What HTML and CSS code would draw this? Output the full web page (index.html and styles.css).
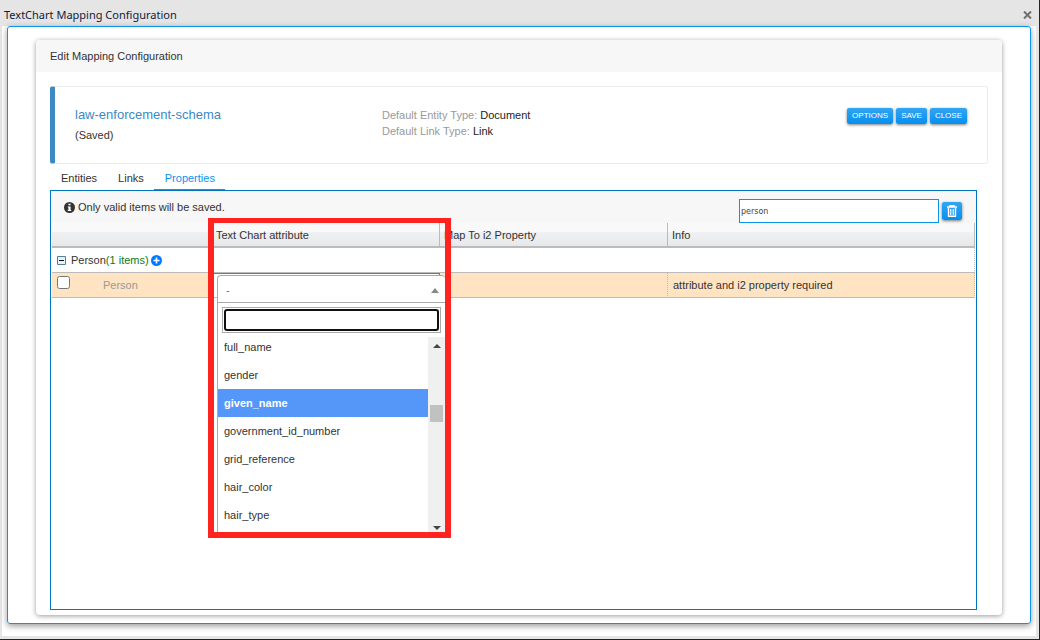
FILE: index.html
```
<!DOCTYPE html>
<html lang="en">
  <head>
    <title>TextChart Mapping Configuration</title>
    <meta charset="utf-8">
    <link rel="stylesheet" href="styles.css">
  </head>
  <body>

  <div class="window">
    <header class="titlebar">
      <h1>TextChart Mapping Configuration</h1>
      <button type="button" class="window-close" aria-label="Close window">
        <svg width="9" height="8" viewBox="0 0 9 8"><path d="M1 .5L8 7.500M8 .5L1 7.500" stroke="#707070" stroke-width="2"/></svg>
      </button>
    </header>

    <div class="client">
      <div class="frame">
        <main class="card">
          <h2 class="card-header">Edit Mapping Configuration</h2>

          <div class="card-body">
            <section class="summary">
              <div class="summary-name">
                <a href="#schema" class="schema">law-enforcement-schema</a>
                <div>(Saved)</div>
              </div>
              <div class="defaults">
                <div>Default Entity Type: <span>Document</span></div>
                <div>Default Link Type: <span>Link</span></div>
              </div>
              <div class="actions">
                <button type="button" class="btn">OPTIONS</button>
                <button type="button" class="btn">SAVE</button>
                <button type="button" class="btn">CLOSE</button>
              </div>
            </section>

            <nav class="tabs">
              <a href="#entities">Entities</a>
              <a href="#links">Links</a>
              <a href="#properties" class="active">Properties</a>
            </nav>

            <section class="panel">
              <div class="toolbar">
                <svg width="11" height="11" viewBox="0 0 10 10"><circle cx="5" cy="5" r="5" fill="#333"/><path d="M4 1.5h2v1.5H4zM3.5 4H6v3.2h.6v1H3.4v-1H4V5h-.5z" fill="#fff"/></svg>
                <span class="hint">Only valid items will be saved.</span>
                <input type="text" class="filter" aria-label="Filter" value="person">
                <button type="button" class="btn btn-trash" aria-label="Clear filter">
                  <svg width="10" height="12" viewBox="0 0 10 12" fill="none" stroke="#fff"><path d="M0 2H10M3 2V.5H7V2" stroke-width="1.400"/><path d="M1.500 3V11.300H8.500V3" stroke-width="1.400"/><path d="M3.500 4V10M5 4V10M6.500 4V10" stroke-width=".8"/></svg>
                </button>
              </div>

              <table class="grid">
                <colgroup>
                  <col class="col-item">
                  <col class="col-attribute">
                  <col class="col-property">
                  <col>
                </colgroup>
                <thead>
                  <tr>
                    <th aria-label="Item"></th>
                    <th>Text Chart attribute</th>
                    <th>Map To i2 Property</th>
                    <th>Info</th>
                  </tr>
                </thead>
                <tbody>
                  <tr class="group">
                    <td colspan="4">
                      <div class="group-title">
                        <button type="button" class="icon-btn" aria-label="Collapse">
                          <svg width="9" height="9" viewBox="0 0 9 9"><path d="M.5.5h8v8h-8z" fill="#e4f4fa" stroke="#557f95"/><path d="M2 4.500h5" stroke="#111"/></svg>
                        </button>
                        <span>Person<span class="count">(1 items)</span></span>
                        <button type="button" class="icon-btn add" aria-label="Add">
                          <svg width="11" height="11" viewBox="0 0 11 11"><circle cx="5.500" cy="5.500" r="5.500" fill="#007bff"/><path d="M5.500 2.500v6M2.500 5.500h6" stroke="#fff" stroke-width="1.600"/></svg>
                        </button>
                      </div>
                    </td>
                  </tr>
                  <tr class="item">
                    <td>
                      <label class="item-label"><input type="checkbox"><span>Person</span></label>
                    </td>
                    <td class="editing">
                      <div class="highlight">
                        <div class="dropdown">
                          <button type="button" class="dropdown-value" aria-expanded="true">
                            <span>-</span>
                            <svg width="8" height="5" viewBox="0 0 8 5"><path d="M0 5L4 0L8 5z" fill="#888"/></svg>
                          </button>
                          <div class="search">
                            <div class="search-box"><input type="text" aria-label="Search attributes"></div>
                          </div>
                          <div class="results">
                            <ul role="listbox" aria-label="Text Chart attribute">
                              <li role="option">full_name</li>
                              <li role="option">gender</li>
                              <li role="option" class="selected" aria-selected="true">given_name</li>
                              <li role="option">government_id_number</li>
                              <li role="option">grid_reference</li>
                              <li role="option">hair_color</li>
                              <li role="option">hair_type</li>
                            </ul>
                            <div class="scrollbar">
                              <svg width="8" height="4" viewBox="0 0 8 4"><path d="M0 4L4 0L8 4z" fill="#444"/></svg>
                              <div class="track"><div class="thumb"></div></div>
                              <svg width="8" height="4" viewBox="0 0 8 4"><path d="M0 0L4 4L8 0z" fill="#444"/></svg>
                            </div>
                          </div>
                        </div>
                      </div>
                    </td>
                    <td></td>
                    <td>attribute and i2 property required</td>
                  </tr>
                </tbody>
              </table>
            </section>
          </div>
        </main>
      </div>
    </div>
  </div>

  </body>
</html>
```
FILE: styles.css
```
* {
  box-sizing: border-box;
}
body {
  margin: 0;
  background: #e5e5e5;
  color: #333;
  font: 11px/16px "Liberation Sans", Arial, sans-serif;
}
h1, h2, ul {
  margin: 0;
  padding: 0;
  font-weight: normal;
}
button, input {
  margin: 0;
  font-family: inherit;
}
button {
  cursor: pointer;
}
a {
  color: inherit;
  text-decoration: none;
}
svg {
  display: block;
}

.window {
  display: flex;
  flex-direction: column;
  min-height: 100vh;
  padding: 0 3px 3px 2px;
  border: solid #1c2340;
  border-width: 0 1px 1px 0;
}

.titlebar {
  display: flex;
  align-items: center;
  justify-content: space-between;
  height: 26px;
  padding: 4px 4px 0 2px;
}
.titlebar h1 {
  color: #111a3a;
  font: 11px/16px "Noto Sans", sans-serif;
}
.window-close {
  padding: 0;
  border: 0;
  background: none;
}

.client {
  display: flex;
  flex: 1;
  padding: 0 5px 12px;
  background: #fff;
}
.frame {
  display: flex;
  flex: 1;
  padding: 13px 28px 8px;
  border: 1px solid #0c93ee;
  border-radius: 3px;
  box-shadow: 0 2px 6px rgba(0,0,0,0.4);
}
.card {
  display: flex;
  flex: 1;
  flex-direction: column;
  border-radius: 4px;
  background: #fff;
  box-shadow: 0 1px 5px rgba(0,0,0,0.4);
}
.card-header {
  padding: 8px 14px;
  border-radius: 4px 4px 0 0;
  background: #f7f7f7;
  font-size: 11px;
}
.card-body {
  display: flex;
  flex: 1;
  flex-direction: column;
  padding: 14px 14px 5px;
}

.summary {
  display: grid;
  grid-template-columns: 307px 1fr auto;
  align-items: start;
  padding: 20px;
  border: 1px solid #ebebeb;
  border-left: 5px solid #3b8ac4;
  border-radius: 3px;
}
.schema {
  display: block;
  margin-bottom: 4px;
  color: #3b8ac4;
  font-size: 13px;
}
.defaults {
  color: #999;
}
.defaults span {
  color: #222;
}
.actions {
  display: flex;
  gap: 3px;
  padding-top: 1px;
}
.btn {
  height: 16px;
  padding: 0 5px;
  border: 0;
  border-radius: 2px;
  background: linear-gradient(#33a5f2, #058ff0);
  box-shadow: 0 1px 3px rgba(0,0,0,0.5);
  color: #fff;
  font-size: 8px;
  line-height: 14px;
}

.tabs {
  display: flex;
}
.tabs a {
  padding: 6px 10px 3px 11px;
  border-bottom: 1px solid transparent;
}
.tabs .active {
  border-color: #0c93ee;
  color: #0c93ee;
}

.panel {
  flex: 1;
  margin-right: 11px;
  padding: 0 1px;
  border: 1px solid #0075c2;
}
.toolbar {
  display: flex;
  align-items: center;
  height: 32px;
  padding: 0 12px 0 13px;
  margin: 0 -1px;
  background: #f7f7f7;
}
.toolbar .hint {
  flex: 1;
  padding-left: 3px;
}
.filter {
  width: 200px;
  height: 24px;
  margin-top: 8px;
  padding: 0 1px;
  border: 1px solid #0c93ee;
  color: #444;
  font: 8px "DejaVu Sans", sans-serif;
}
.btn-trash {
  display: flex;
  align-items: center;
  justify-content: center;
  width: 20px;
  height: 18px;
  margin: 8px 2px 0 3px;
  padding: 0;
}

.grid {
  width: 100%;
  table-layout: fixed;
  border-spacing: 0;
}
.col-item {
  width: 160px;
}
.col-attribute {
  width: 228px;
}
.col-property {
  width: 228px;
}
.grid th {
  height: 25px;
  padding: 0 4px;
  border-right: 1px solid #bbb;
  border-bottom: 2px solid #bbb;
  background: linear-gradient(#f9f9f9 40%, #f0f1f2 40%, #e6e8ea);
  font-weight: normal;
  text-align: left;
}
.grid td {
  height: 25px;
  padding: 0 5px;
  border-right: 1px dotted #bbb;
  border-bottom: 1px solid #bbb;
}
.item td {
  background: #ffe4c4;
}
.group-title {
  display: flex;
  align-items: center;
}
.count {
  color: #107a10;
}
.icon-btn {
  margin-right: 5px;
  padding: 0;
  border: 0;
  background: none;
}
.add {
  margin-left: 2px;
}
.item-label {
  display: flex;
  align-items: center;
  gap: 33px;
  color: #999;
}
.item-label input {
  width: 13px;
  height: 13px;
  margin: 0 0 5px;
}
.item .editing {
  position: relative;
  padding: 0;
  border-top: 1px solid #777;
  border-right: 1px solid #777;
  background: #fff;
}

/* attribute picker, opened over the grid */
.highlight {
  position: absolute;
  z-index: 1;
  top: -56px;
  left: -4px;
  width: 243px;
  padding: 52px 0 0 3px;
  border: 6px solid #ff2420;
  border-top-width: 5px;
}
.dropdown {
  border: 1px solid #aaa;
  border-width: 1px 0 0 1px;
  border-radius: 4px 4px 0 0;
  background: #fff;
}
.dropdown-value {
  display: flex;
  align-items: center;
  justify-content: space-between;
  width: 100%;
  height: 27px;
  padding: 2px 6px 0 8px;
  border: 0;
  border-bottom: 1px solid #aaa;
  background: none;
  color: #777;
  font-size: 11px;
}
.search {
  padding: 4px;
}
.search-box {
  padding: 1px;
  border: 1px solid #aaa;
}
.search input {
  display: block;
  width: 100%;
  height: 22px;
  border: 2px solid #101010;
  border-radius: 3px;
  outline: none;
}
.results {
  display: flex;
  height: 195px;
}
.results ul {
  flex: 1;
  list-style: none;
}
.results li {
  padding: 6px;
}
.results li:first-child {
  padding-top: 2px;
}
.results .selected {
  background: #5597f8;
  color: #fff;
  font-weight: bold;
}
.scrollbar {
  display: flex;
  flex-direction: column;
  align-items: center;
  width: 17px;
  padding: 7px 0 2px;
  background: #f0f0f0;
}
.track {
  flex: 1;
  padding-top: 57px;
}
.thumb {
  width: 13px;
  height: 17px;
  background: #c1c1c1;
}
```
